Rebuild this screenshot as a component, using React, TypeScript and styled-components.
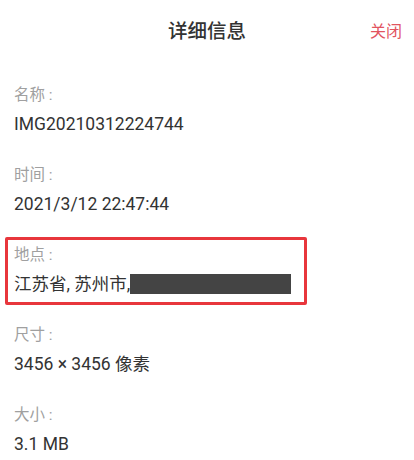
import React from "react";
import styled, { createGlobalStyle } from "styled-components";

const GlobalStyle = createGlobalStyle`
  html, body {
    margin: 0;
    padding: 0;
    background: #ffffff;
  }
  body {
    font-family: Roboto, "Noto Sans CJK SC", sans-serif;
    -webkit-font-smoothing: antialiased;
  }
`;

const Sheet = styled.div`
  width: 414px;
  height: 460px;
  background: #fff;
  overflow: hidden;
`;

const Header = styled.div`
  height: 64px;
  display: flex;
  align-items: center;
  justify-content: center;
  position: relative;
`;

const Title = styled.h1`
  margin: 0;
  font-size: 19.5px;
  font-weight: 500;
  color: #333;
  line-height: 24px;
`;

const CloseButton = styled.button`
  position: absolute;
  right: 12px;
  top: 20px;
  border: 0;
  background: none;
  padding: 0;
  font-family: inherit;
  font-size: 16px;
  line-height: 24px;
  color: #e2545f;
  cursor: pointer;
`;

const List = styled.div`
  display: flex;
  flex-direction: column;
  gap: 26px;
  padding-top: 19px;
`;

const Field = styled.div<{ $marked?: boolean }>`
  position: relative;
  display: flex;
  flex-direction: column;
  gap: 4px;
  padding: 0 14px;

  ${(p) =>
    p.$marked &&
    `
    &::after {
      content: "";
      position: absolute;
      left: 5px;
      top: -6px;
      width: 302px;
      height: 68px;
      box-sizing: border-box;
      border: 3px solid #e8363c;
      border-radius: 2px;
      pointer-events: none;
    }
  `}
`;

const Label = styled.div`
  font-size: 15.5px;
  line-height: 24px;
  color: #a0a0a0;
`;

const Value = styled.div`
  font-size: 17.5px;
  line-height: 26px;
  color: #333;
  white-space: nowrap;
`;

const Redacted = styled.span<{ $width: number }>`
  display: inline-block;
  width: ${(p) => p.$width}px;
  height: 20px;
  vertical-align: -4px;
  background: #444;
`;

export default function App() {
  return (
    <>
      <GlobalStyle />
      <Sheet>
        <Header>
          <Title>详细信息</Title>
          <CloseButton>关闭</CloseButton>
        </Header>
        <List>
          <Field>
            <Label>名称 :</Label>
            <Value>IMG20210312224744</Value>
          </Field>
          <Field>
            <Label>时间 :</Label>
            <Value>2021/3/12 22:47:44</Value>
          </Field>
          <Field $marked>
            <Label>地点 :</Label>
            <Value>
              江苏省, 苏州市,
              <Redacted $width={161} />
            </Value>
          </Field>
          <Field>
            <Label>尺寸 :</Label>
            <Value>3456 × 3456 像素</Value>
          </Field>
          <Field>
            <Label>大小 :</Label>
            <Value>3.1 MB</Value>
          </Field>
        </List>
      </Sheet>
    </>
  );
}
